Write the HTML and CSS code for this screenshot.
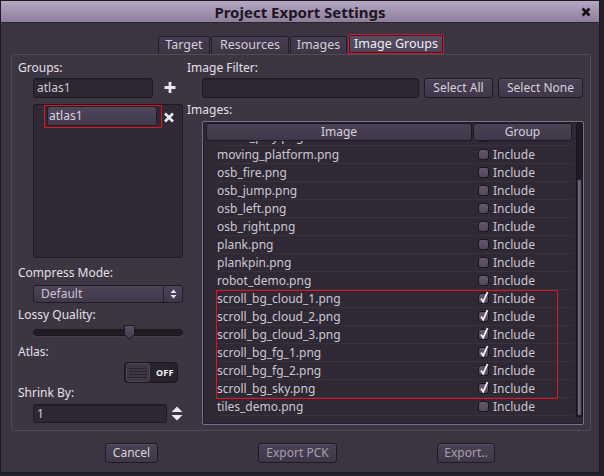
FILE: index.html
```html
<!DOCTYPE html>
<html>
<head>
<meta charset="utf-8">
<link rel="stylesheet" href="styles.css">
</head>
<body>
<div class="window">
  <div class="titlebar">
    <span></span>
    <span class="title">Project Export Settings</span>
    <span class="close"><svg width="10" height="10" viewBox="0 0 10 10"><path d="M1.5 1.5l7 7M8.5 1.5l-7 7" stroke="#141116" stroke-width="2.6"/></svg></span>
  </div>
  <div class="tabs">
    <div class="tab t1">Target</div>
    <div class="tab t2">Resources</div>
    <div class="tab t3">Images</div>
    <div class="tab active">Image Groups</div>
  </div>
  <div class="panel">
    <div class="leftcol">
      <div class="label first">Groups:</div>
      <div class="inrow">
        <div class="input grp">atlas1</div>
        <span class="plus"><svg width="12" height="11" viewBox="0 0 12 11"><path d="M6 0v11M0.5 5.5h11" stroke="#ebe7ef" stroke-width="2.8"/></svg></span>
      </div>
      <div class="list">
        <div class="listrow">
          <div class="mark"><div class="item">atlas1</div></div>
          <span class="del"><svg width="12" height="11" viewBox="0 0 12 11"><path d="M2 1.5l8 8M10 1.5l-8 8" stroke="#ebe7ef" stroke-width="2.6"/></svg></span>
        </div>
      </div>
      <div class="label l2">Compress Mode:</div>
      <div class="select">
        <span class="seltext">Default</span>
        <span class="selarrow"><svg width="7" height="10" viewBox="0 0 7 10"><path d="M3.5 0.5L6.5 4H0.5z M3.5 9.5L6.5 6H0.5z" fill="#e6e2ea"/></svg></span>
      </div>
      <div class="label l3">Lossy Quality:</div>
      <div class="slider">
        <div class="track"></div>
        <svg class="grabber" width="13" height="16" viewBox="0 0 13 16"><defs><linearGradient id="gg" x1="0" y1="0" x2="0" y2="1"><stop offset="0" stop-color="#5a5066"/><stop offset="1" stop-color="#433a4c"/></linearGradient></defs><path d="M1.5 1.5h10v9l-5 4.5l-5-4.5z" fill="url(#gg)" stroke="#1c1920" stroke-width="1"/></svg>
      </div>
      <div class="label l4">Atlas:</div>
      <div class="toggle">
        <div class="knob"><i></i><i></i><i></i><i></i></div>
        <span class="off">OFF</span>
      </div>
      <div class="label l5">Shrink By:</div>
      <div class="spinrow">
        <div class="input spin">1</div>
        <span class="spinarrows"><svg width="12" height="15" viewBox="0 0 12 15"><path d="M6 0.5L11.5 6H0.5z M6 14.5L11.5 9H0.5z" fill="#ebe7ef"/></svg></span>
      </div>
    </div>
    <div class="rightcol">
      <div class="label first">Image Filter:</div>
      <div class="inrow">
        <div class="input filter"></div>
        <div class="btn selall">Select All</div>
        <div class="btn selnone">Select None</div>
      </div>
      <div class="label l2">Images:</div>
      <div class="tree">
        <div class="treemain">
          <div class="thead">
            <div class="th thimg">Image</div>
            <div class="th thgrp">Group</div>
          </div>
          <div class="viewport">
            <div class="rows">
              <div class="row partial"><span class="name">menu_play.png</span><span class="cb"></span></div>
              <div class="row"><span class="name">moving_platform.png</span><span class="cb"></span><span class="inc">Include</span></div>
              <div class="row"><span class="name">osb_fire.png</span><span class="cb"></span><span class="inc">Include</span></div>
              <div class="row"><span class="name">osb_jump.png</span><span class="cb"></span><span class="inc">Include</span></div>
              <div class="row"><span class="name">osb_left.png</span><span class="cb"></span><span class="inc">Include</span></div>
              <div class="row"><span class="name">osb_right.png</span><span class="cb"></span><span class="inc">Include</span></div>
              <div class="row"><span class="name">plank.png</span><span class="cb"></span><span class="inc">Include</span></div>
              <div class="row"><span class="name">plankpin.png</span><span class="cb"></span><span class="inc">Include</span></div>
              <div class="row"><span class="name">robot_demo.png</span><span class="cb"></span><span class="inc">Include</span></div>
              <div class="row"><span class="name">scroll_bg_cloud_1.png</span><span class="cb on"><svg width="12" height="13" viewBox="0 0 12 13"><path d="M3 7.5l2.2 3.2l4.3-9.5" fill="none" stroke="#f2eff5" stroke-width="1.8"/></svg></span><span class="inc">Include</span></div>
              <div class="row"><span class="name">scroll_bg_cloud_2.png</span><span class="cb on"><svg width="12" height="13" viewBox="0 0 12 13"><path d="M3 7.5l2.2 3.2l4.3-9.5" fill="none" stroke="#f2eff5" stroke-width="1.8"/></svg></span><span class="inc">Include</span></div>
              <div class="row"><span class="name">scroll_bg_cloud_3.png</span><span class="cb on"><svg width="12" height="13" viewBox="0 0 12 13"><path d="M3 7.5l2.2 3.2l4.3-9.5" fill="none" stroke="#f2eff5" stroke-width="1.8"/></svg></span><span class="inc">Include</span></div>
              <div class="row"><span class="name">scroll_bg_fg_1.png</span><span class="cb on"><svg width="12" height="13" viewBox="0 0 12 13"><path d="M3 7.5l2.2 3.2l4.3-9.5" fill="none" stroke="#f2eff5" stroke-width="1.8"/></svg></span><span class="inc">Include</span></div>
              <div class="row"><span class="name">scroll_bg_fg_2.png</span><span class="cb on"><svg width="12" height="13" viewBox="0 0 12 13"><path d="M3 7.5l2.2 3.2l4.3-9.5" fill="none" stroke="#f2eff5" stroke-width="1.8"/></svg></span><span class="inc">Include</span></div>
              <div class="row"><span class="name">scroll_bg_sky.png</span><span class="cb on"><svg width="12" height="13" viewBox="0 0 12 13"><path d="M3 7.5l2.2 3.2l4.3-9.5" fill="none" stroke="#f2eff5" stroke-width="1.8"/></svg></span><span class="inc">Include</span></div>
              <div class="row"><span class="name">tiles_demo.png</span><span class="cb"></span><span class="inc">Include</span></div>
              <div class="redbox"></div>
            </div>
          </div>
        </div>
        <div class="scrollbar"><div class="thumb"></div></div>
      </div>
    </div>
  </div>
  <div class="buttons">
    <div class="btn bcancel">Cancel</div>
    <div class="btn disabled bpck">Export PCK</div>
    <div class="btn disabled bexp">Export..</div>
  </div>
</div>
</body>
</html>
```

FILE: styles.css
```css
* { box-sizing: border-box; }
html, body { margin: 0; padding: 0; }
body {
  background: #25212a;
  width: 604px;
  height: 476px;
  overflow: hidden;
  font-family: "Noto Sans", "Open Sans", sans-serif;
  font-size: 12px;
  color: #e2dee6;
}
.window {
  width: 600px;
  height: 473px;
  border: 1px solid #1c191f;
  background: #3b3441;
  display: flex;
  flex-direction: column;
}
.titlebar {
  height: 22px;
  flex: none;
  background: linear-gradient(#b5a6c1, #8f7e9c);
  border-bottom: 1px solid #2a2530;
  display: grid;
  grid-template-columns: 1fr auto 1fr;
  align-items: center;
}
.title {
  font-weight: bold;
  font-size: 15px;
  color: #1b171f;
  line-height: 20px;
}
.close {
  justify-self: end;
  margin-right: 8px;
  display: flex;
}
.tabs {
  flex: none;
  margin-top: 11px;
  height: 20px;
  padding-left: 157px;
  display: flex;
  align-items: flex-end;
  gap: 1px;
}
.tab {
  height: 18px;
  line-height: 16px;
  text-align: center;
  background: linear-gradient(#443c4e, #3d3546);
  border: 1px solid #241f29;
  border-bottom: none;
  border-radius: 2px 2px 0 0;
  color: #d3cdd8;
  font-size: 12.5px;
}
.t1 { width: 52px; }
.t2 { width: 78px; }
.t3 { width: 57px; }
.tab.active {
  width: 96px;
  height: 20px;
  line-height: 17px;
  border: 1px solid #e0141a;
  background: linear-gradient(#584e63, #4c4356);
  color: #f0ecf3;
  box-shadow: inset 0 0 0 1px #2a2430;
}
.panel {
  flex: none;
  margin: 0 8px 0 10px;
  height: 377px;
  border: 1px solid #524859;
  border-radius: 3px;
  background: #3c3542;
  display: flex;
}
.label {
  height: 16px;
  line-height: 16px;
  color: #e4e0e8;
}
.label.first { margin-top: 5px; }
.leftcol {
  margin-left: 6px;
  width: 165px;
  flex: none;
  display: flex;
  flex-direction: column;
}
.rightcol {
  margin-left: 4px;
  width: 397px;
  flex: none;
  display: flex;
  flex-direction: column;
}
.inrow {
  margin-top: 2px;
  height: 20px;
  display: flex;
  align-items: center;
}
.input {
  height: 20px;
  background: #2c2732;
  border: 1px solid #1d1a21;
  border-radius: 3px;
  color: #cdc7d2;
  line-height: 18px;
  padding-left: 3px;
  box-shadow: inset 0 1px 0 #25212a;
}
.input.grp { margin-left: 15px; width: 120px; }
.plus { margin-left: 11px; display: flex; margin-top: -1px; }
.list {
  margin-top: 6px;
  margin-left: 15px;
  width: 150px;
  height: 154px;
  background: #2e2935;
  border: 1px solid #1d1a21;
  border-radius: 3px;
}
.listrow {
  display: flex;
  align-items: center;
}
.mark {
  margin-left: 10px;
  width: 118px;
  height: 23px;
  border: 1px solid #e0141a;
  padding: 0 3px 0 2px;
}
.item {
  height: 20px;
  width: 110px;
  background: linear-gradient(#51475c, #43394d);
  border: 1px solid #221e27;
  border-radius: 3px;
  line-height: 18px;
  padding-left: 1px;
  color: #d9d3de;
}
.del { margin-left: 1px; display: flex; margin-top: 1px; }
.l2 { margin-top: 7px; }
.rightcol .l2 { margin-top: 4px; }
.select {
  margin-top: 4px;
  margin-left: 15px;
  width: 150px;
  height: 18px;
  border: 1px solid #1f1b23;
  border-radius: 3px;
  background: linear-gradient(#4d4358, #40374a);
  display: flex;
}
.seltext {
  flex: 1;
  padding-left: 7px;
  line-height: 16px;
  color: #cbc5d0;
}
.selarrow {
  width: 19px;
  border-left: 1px solid #26212b;
  display: flex;
  align-items: center;
  justify-content: center;
}
.l3 { margin-top: 4px; }
.slider {
  margin-top: 2px;
  margin-left: 15px;
  width: 150px;
  height: 15px;
  position: relative;
  display: flex;
  align-items: center;
}
.track {
  width: 150px;
  height: 7px;
  border-radius: 4px;
  background: #211d25;
  border: 1px solid #1a171d;
  box-shadow: 0 1px 0 #463e4e;
}
.grabber {
  position: absolute;
  left: 90px;
  top: -1px;
}
.l4 { margin-top: 4px; }
.toggle {
  margin-top: 2px;
  margin-left: 106px;
  width: 54px;
  height: 21px;
  background: #27232c;
  border: 1px solid #1a171d;
  border-radius: 4px;
  display: flex;
  align-items: center;
  padding: 1px;
}
.knob {
  width: 24px;
  height: 19px;
  background: #3e3745;
  border: 1px solid #4c4455;
  border-radius: 3px;
  display: flex;
  flex-direction: column;
  justify-content: center;
  gap: 2px;
  padding: 0 2px;
}
.knob i {
  display: block;
  height: 1px;
  background: #2a2630;
}
.off {
  margin-left: 6px;
  font-size: 9px;
  font-weight: bold;
  color: #f3f0f5;
  letter-spacing: 0.2px;
}
.l5 { margin-top: 2px; }
.spinrow {
  margin-top: 3px;
  height: 19px;
  display: flex;
  align-items: center;
}
.input.spin {
  margin-left: 15px;
  width: 134px;
  height: 19px;
  line-height: 17px;
}
.spinarrows { margin-left: 4px; display: flex; }
.input.filter { margin-left: 15px; width: 217px; }
.btn {
  height: 20px;
  border: 1px solid #1d1a21;
  border-radius: 3px;
  background: linear-gradient(#4a4154, #3f3649);
  box-shadow: inset 0 1px 0 #564c61;
  color: #d6d1db;
  text-align: center;
  line-height: 18px;
}
.selall { margin-left: 5px; width: 69px; }
.selnone { margin-left: 5px; width: 85px; }
.tree {
  margin-top: 3px;
  margin-left: 15px;
  width: 382px;
  height: 304px;
  border: 1px solid #7f6b91;
  border-radius: 2px;
  background: #2e2935;
  display: flex;
  box-shadow: inset 0 0 0 1px #221e27;
}
.treemain {
  width: 373px;
  display: flex;
  flex-direction: column;
  padding-top: 1px;
}
.thead {
  height: 18px;
  display: flex;
  margin-left: 3px;
  gap: 1px;
  position: relative;
  z-index: 1;
}
.th {
  height: 18px;
  border: 1px solid #1d1a21;
  border-radius: 3px;
  background: linear-gradient(#4a4154, #403749);
  color: #d6d1db;
  text-align: center;
  line-height: 16px;
}
.thimg { width: 266px; }
.thgrp { width: 99px; }
.viewport {
  flex: 1;
  overflow: hidden;
}
.rows {
  margin-top: -13px;
  position: relative;
}
.row {
  height: 18px;
  margin-left: 14px;
  width: 356px;
  border-bottom: 1px solid #38323f;
  display: flex;
  align-items: center;
  color: #cdc7d2;
  line-height: 17px;
}
.name { width: 261px; flex: none; }
.cb {
  display: block;
  width: 11px;
  height: 11px;
  flex: none;
  border: 1px solid #18151b;
  border-radius: 3px;
  background: linear-gradient(#62586e, #51485c);
  position: relative;
}
.cb svg {
  position: absolute;
  left: -1px;
  top: -3px;
}
.inc { margin-left: 4px; }
.redbox {
  position: absolute;
  left: 13px;
  top: 162px;
  width: 342px;
  height: 109px;
  border: 1px solid #e0141a;
  pointer-events: none;
}
.scrollbar {
  margin-left: 2px;
  margin-top: 1px;
  width: 7px;
  height: 294px;
  background: #1e1b22;
  border: 1px solid #18151b;
  border-radius: 2px;
  display: flex;
  flex-direction: column;
  justify-content: flex-end;
}
.thumb {
  height: 237px;
  background: linear-gradient(90deg, #7a6b88, #5c5069);
  border-radius: 2px;
  border: 1px solid #2a2530;
}
.buttons {
  flex: none;
  margin-top: 12px;
  height: 20px;
  display: flex;
  padding-left: 104px;
}
.bcancel { width: 53px; }
.bpck { width: 79px; margin-left: 100px; }
.bexp { width: 58px; margin-left: 100px; }
.btn.disabled { color: #a59eac; }
```
